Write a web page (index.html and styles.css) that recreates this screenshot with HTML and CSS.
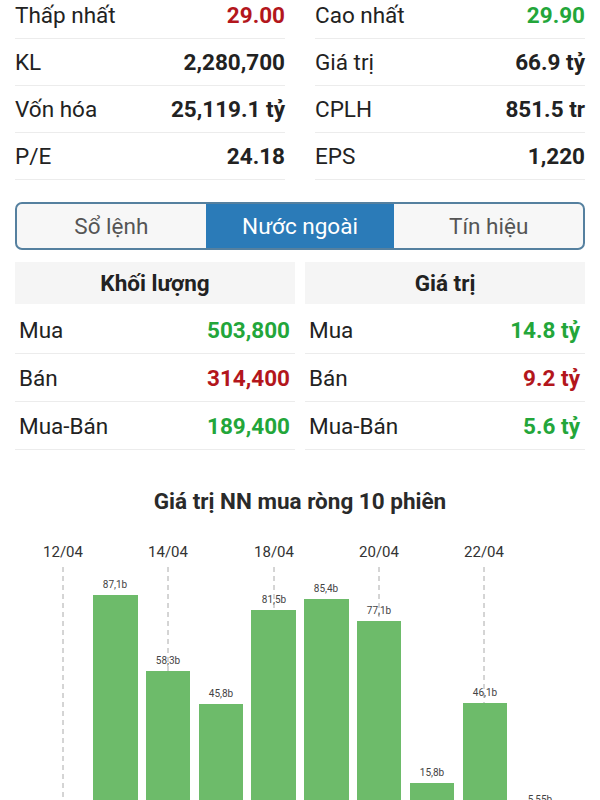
FILE: index.html
```html
<!DOCTYPE html>
<html lang="vi">
<head>
    <meta charset="UTF-8">
    <meta name="viewport" content="width=device-width, initial-scale=1.0">
    <title>Nước ngoài</title>
    <link rel="stylesheet" href="styles.css">
</head>
<body>
    <div class="stats">
        <div class="stats-col">
            <div class="stat-row"><span>Thấp nhất</span><b class="down">29.00</b></div>
            <div class="stat-row"><span>KL</span><b>2,280,700</b></div>
            <div class="stat-row"><span>Vốn hóa</span><b>25,119.1 tỷ</b></div>
            <div class="stat-row"><span>P/E</span><b>24.18</b></div>
        </div>
        <div class="stats-col">
            <div class="stat-row"><span>Cao nhất</span><b class="up">29.90</b></div>
            <div class="stat-row"><span>Giá trị</span><b>66.9 tỷ</b></div>
            <div class="stat-row"><span>CPLH</span><b>851.5 tr</b></div>
            <div class="stat-row"><span>EPS</span><b>1,220</b></div>
        </div>
    </div>

    <div class="tabs">
        <div class="tab">Sổ lệnh</div>
        <div class="tab active">Nước ngoài</div>
        <div class="tab">Tín hiệu</div>
    </div>

    <div class="foreign">
        <div class="foreign-table">
            <div class="foreign-head">Khối lượng</div>
            <div class="foreign-row"><span>Mua</span><b class="up">503,800</b></div>
            <div class="foreign-row"><span>Bán</span><b class="down">314,400</b></div>
            <div class="foreign-row"><span>Mua-Bán</span><b class="up">189,400</b></div>
        </div>
        <div class="foreign-table">
            <div class="foreign-head">Giá trị</div>
            <div class="foreign-row"><span>Mua</span><b class="up">14.8 tỷ</b></div>
            <div class="foreign-row"><span>Bán</span><b class="down">9.2 tỷ</b></div>
            <div class="foreign-row"><span>Mua-Bán</span><b class="up">5.6 tỷ</b></div>
        </div>
    </div>

    <div class="chart">
        <div class="chart-title">Giá trị NN mua ròng 10 phiên</div>
        <svg class="chart-svg" width="600" height="320" viewBox="0 0 600 320">
            <g class="dates">
                <text x="63" y="37">12/04</text>
                <text x="168" y="37">14/04</text>
                <text x="274" y="37">18/04</text>
                <text x="379" y="37">20/04</text>
                <text x="484" y="37">22/04</text>
            </g>
            <g class="grid">
                <line x1="63" y1="47" x2="63" y2="320"/>
                <line x1="168" y1="47" x2="168" y2="320"/>
                <line x1="274" y1="47" x2="274" y2="320"/>
                <line x1="379" y1="47" x2="379" y2="320"/>
                <line x1="484" y1="47" x2="484" y2="320"/>
            </g>
            <g class="bars">
                <rect x="93" y="75" width="45" height="245"/>
                <rect x="146" y="151" width="44" height="169"/>
                <rect x="199" y="184" width="44" height="136"/>
                <rect x="251" y="90" width="45" height="230"/>
                <rect x="304" y="79" width="45" height="241"/>
                <rect x="357" y="101" width="44" height="219"/>
                <rect x="410" y="263" width="44" height="57"/>
                <rect x="463" y="183" width="44" height="137"/>
                <rect x="516" y="290" width="44" height="30"/>
            </g>
            <g class="values">
                <text x="115" y="68">87,1b</text>
                <text x="168" y="144">58,3b</text>
                <text x="221" y="177">45,8b</text>
                <text x="274" y="83">81,5b</text>
                <text x="326" y="72">85,4b</text>
                <text x="379" y="94">77,1b</text>
                <text x="432" y="256">15,8b</text>
                <text x="485" y="176">46,1b</text>
                <text x="540" y="283">5,55b</text>
            </g>
        </svg>
    </div>
</body>
</html>
```

FILE: styles.css
```css
body, html {
    margin: 0;
    padding: 0;
    height: 800px;
    overflow: hidden;
    background: #fff;
    font-family: Roboto, 'Liberation Sans', sans-serif;
    color: #222;
}
b {
    font-weight: 700;
}
.up {
    color: #23a63a;
}
.down {
    color: #b3161c;
}
.stats {
    display: grid;
    grid-template-columns: 1fr 1fr;
    gap: 30px;
    padding: 0 15px;
    margin-top: -8px;
}
.stat-row {
    display: flex;
    justify-content: space-between;
    align-items: center;
    height: 46px;
    border-bottom: 1px solid #ececec;
    font-size: 22.5px;
}
.tabs {
    display: flex;
    margin: 22px 15px 0;
    height: 44px;
    border: 2px solid #55809f;
    border-radius: 7px;
    overflow: hidden;
    background: #f7f7f7;
}
.tab {
    flex: 1;
    display: flex;
    align-items: center;
    justify-content: center;
    font-size: 22.5px;
    color: #555;
}
.tab.active {
    background: #2b7bb8;
    color: #fff;
}
.foreign {
    display: grid;
    grid-template-columns: 1fr 1fr;
    gap: 10px;
    padding: 0 15px;
    margin-top: 12px;
}
.foreign-head {
    height: 42px;
    display: flex;
    align-items: center;
    justify-content: center;
    background: #f5f5f5;
    font-size: 22.5px;
    font-weight: 700;
    color: #222;
}
.foreign-row {
    display: flex;
    justify-content: space-between;
    align-items: center;
    height: 46px;
    padding: 1px 5px 0 4px;
    border-bottom: 1px solid #ececec;
    font-size: 22.5px;
}
.foreign-row:nth-child(2) {
    height: 46px;
    padding-top: 3px;
}
.chart {
    margin-top: 37px;
}
.chart-title {
    text-align: center;
    font-size: 22.5px;
    font-weight: 700;
    color: #2a2a2a;
    line-height: 28px;
}
.chart-svg {
    display: block;
    margin-top: 5px;
}
.dates text {
    font-size: 15px;
    fill: #333;
    text-anchor: middle;
}
.grid line {
    stroke: #aaa;
    stroke-width: 1;
    stroke-dasharray: 5 4;
}
.bars rect {
    fill: #6dbb6a;
}
.values text {
    font-size: 10px;
    fill: #444;
    text-anchor: middle;
}
```
